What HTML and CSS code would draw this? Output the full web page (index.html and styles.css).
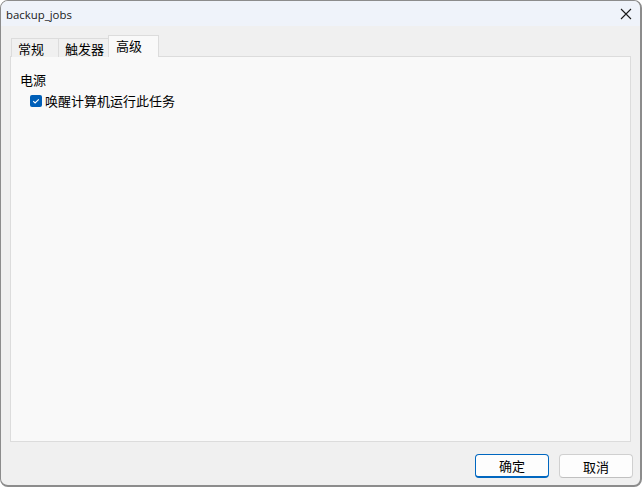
FILE: index.html
```html
<!DOCTYPE html>
<html lang="zh">
<head>
<meta charset="utf-8">
<link rel="stylesheet" href="styles.css">
</head>
<body>
<div class="window">
  <div class="titlebar">
    <span class="title">backup_jobs</span>
    <span class="close">
      <svg width="12" height="12" viewBox="0 0 12 12"><path d="M1 1 L11 11 M11 1 L1 11" stroke="#1a1a1a" stroke-width="1.1" fill="none"/></svg>
    </span>
  </div>
  <div class="body">
    <div class="tabs">
      <div class="tab">常规</div>
      <div class="tab">触发器</div>
      <div class="tab active">高级</div>
    </div>
    <div class="panel">
      <div class="group-label">电源</div>
      <label class="check-row">
        <span class="checkbox">
          <svg width="12" height="12" viewBox="0 0 12 12"><path d="M3.2 6.2 L5.1 8 L8.8 4.3" stroke="#fff" stroke-width="1.1" fill="none"/></svg>
        </span>
        <span>唤醒计算机运行此任务</span>
      </label>
    </div>
    <div class="buttons">
      <button class="btn primary">确定</button>
      <button class="btn">取消</button>
    </div>
  </div>
</div>
</body>
</html>
```

FILE: styles.css
```css
html, body {
  margin: 0;
  padding: 0;
  width: 642px;
  height: 487px;
  background: #ffffff;
  overflow: hidden;
}
body {
  font-family: "Noto Sans", "Noto Sans CJK SC", sans-serif;
  font-size: 12px;
  color: #000;
}
.window {
  box-sizing: border-box;
  width: 642px;
  height: 487px;
  border: 1px solid #8c8c8c;
  border-right-width: 2px;
  border-bottom-width: 2px;
  border-radius: 8px;
  overflow: hidden;
  display: flex;
  flex-direction: column;
  background: #f0f0f0;
}
.titlebar {
  height: 25px;
  background: #eff3fa;
  display: flex;
  align-items: center;
  justify-content: space-between;
  padding-left: 5px;
  padding-right: 8px;
  flex: none;
}
.title {
  font-family: "Open Sans", "Noto Sans", sans-serif;
  font-size: 11.4px;
  color: #1a1a1a;
  position: relative;
  top: 1px;
}
.close {
  display: flex;
  width: 12px;
  height: 12px;
}
.body {
  flex: 1;
  display: flex;
  flex-direction: column;
  padding: 9px 9px 7px 9px;
}
.tabs {
  display: flex;
  align-items: flex-end;
  height: 22px;
  padding-left: 1px;
  margin-bottom: -1px;
  position: relative;
  z-index: 1;
}
.tab {
  font-family: "Noto Sans CJK SC", sans-serif;
  font-size: 13px;
  height: 19px;
  line-height: 19px;
  padding: 0 0 0 6px;
  background: #f0f0f0;
  border: 1px solid #dcdcdc;
  border-bottom: none;
  margin-right: -1px;
  box-sizing: border-box;
  white-space: nowrap;
}
.tab:nth-child(1) { width: 48px; }
.tab:nth-child(2) { width: 51px; }
.tab.active {
  height: 22px;
  line-height: 20px;
  width: 51px;
  padding-left: 7px;
  background: #f9f9f9;
  border-color: #dcdcdc;
}
.panel {
  flex: none;
  height: 386px;
  background: #f9f9f9;
  border: 1px solid #dcdcdc;
  padding: 14px 9px;
  box-sizing: border-box;
}
.group-label {
  font-family: "Noto Sans CJK SC", sans-serif;
  font-size: 13px;
  line-height: 18px;
}
.check-row {
  display: flex;
  align-items: center;
  gap: 3px;
  margin-top: 3px;
  margin-left: 10px;
  font-family: "Noto Sans CJK SC", sans-serif;
  font-size: 13px;
  line-height: 18px;
}
.checkbox {
  width: 12px;
  height: 12px;
  border-radius: 2px;
  background: #005fb8;
  display: flex;
}
.buttons {
  display: flex;
  justify-content: flex-end;
  gap: 10px;
  margin-top: 12px;
  margin-right: -2px;
}
.btn {
  width: 74px;
  height: 24px;
  box-sizing: border-box;
  border: 1px solid #d0d0d0;
  border-bottom-color: #c0c0c0;
  border-radius: 4px;
  background: #fdfdfd;
  font-family: "Noto Sans CJK SC", sans-serif;
  font-size: 13px;
  color: #000;
  padding: 0;
}
.btn.primary {
  border: 1px solid #0067c0;
  border-bottom-width: 2px;
}
```
